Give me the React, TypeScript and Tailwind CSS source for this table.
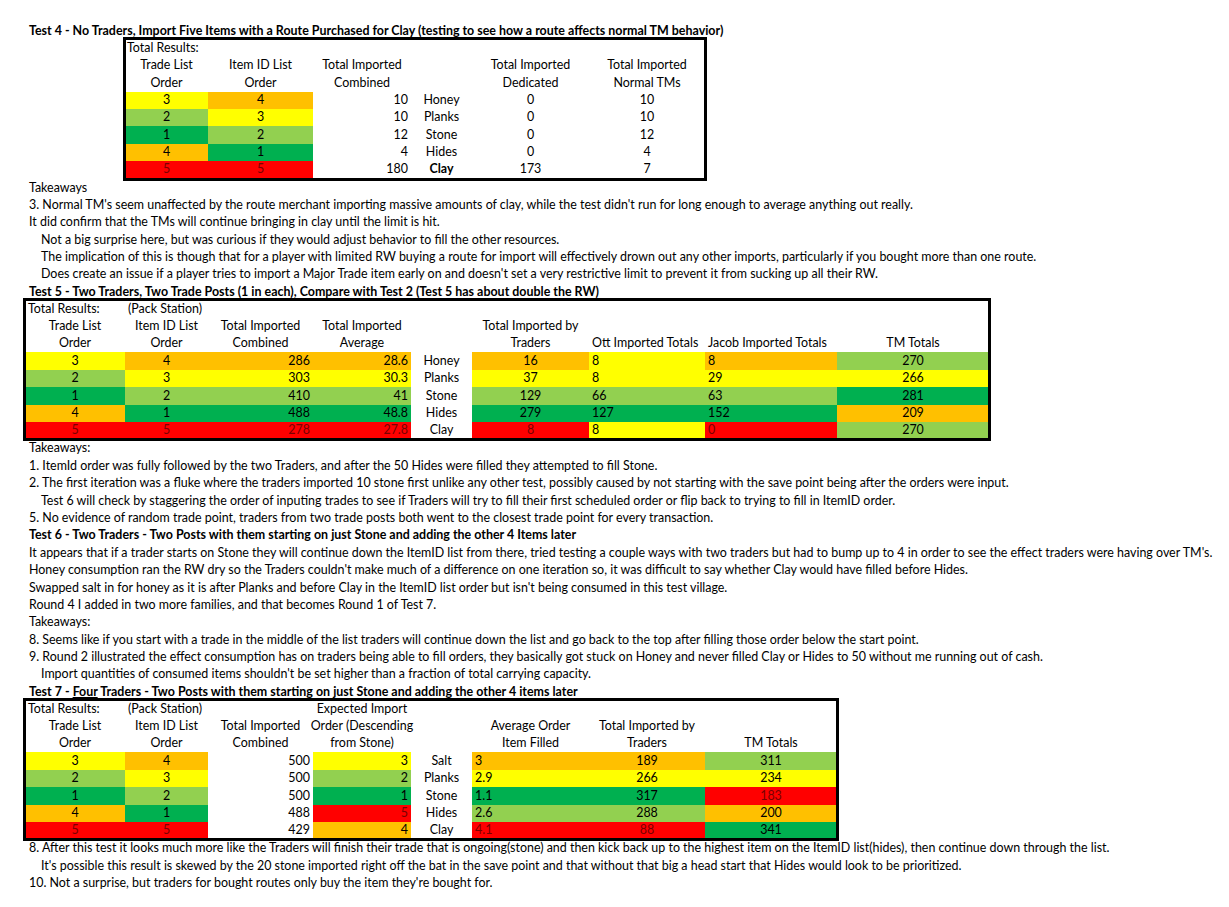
import React from "react";
import clsx from "clsx";

type Fill = "y" | "o" | "lg" | "g" | "r" | "";
type Align = "c" | "r" | "l";

const fillCls: Record<Fill, string> = {
  y: "bg-[#ffff00]",
  o: "bg-[#ffc000]",
  lg: "bg-[#92d050]",
  g: "bg-[#00b050]",
  r: "bg-[#ff0000] text-[#7a0000]",
  "": "",
};

const alignCls: Record<Align, string> = {
  c: "justify-center",
  r: "justify-end pr-[3px]",
  l: "justify-start pl-[3px]",
};

function Cell({ f = "", a = "c", b = false, children }: { f?: Fill; a?: Align; b?: boolean; children?: React.ReactNode }) {
  return (
    <div className={clsx("flex items-center h-[17.4px] whitespace-nowrap min-w-0", fillCls[f], alignCls[a], b && "font-bold")}>
      {children}
    </div>
  );
}

function Line({ children, indent = false, bold = false }: { children: React.ReactNode; indent?: boolean; bold?: boolean }) {
  return (
    <div className={clsx("h-[17.4px] leading-[17.4px] whitespace-nowrap", indent ? "pl-[41px]" : "pl-[29px]", bold && "font-bold")}>
      {children}
    </div>
  );
}

// columns B..G
function Test4() {
  const rows: [Fill, string, Fill, string, string, string, string, string][] = [
    ["y", "3", "o", "4", "10", "Honey", "0", "10"],
    ["lg", "2", "y", "3", "10", "Planks", "0", "10"],
    ["g", "1", "lg", "2", "12", "Stone", "0", "12"],
    ["o", "4", "g", "1", "4", "Hides", "0", "4"],
    ["r", "5", "r", "5", "180", "Clay", "173", "7"],
  ];
  return (
    <div className="ml-[125px] w-[580px] outline-[3px] outline-black -outline-offset-1">
      <div className="h-[17.4px] leading-[17.4px] pl-[2px]">Total Results:</div>
      <div className="grid grid-cols-[83px_105px_98px_61px_117px_116px]">
        <Cell>Trade List</Cell>
        <Cell>Item ID List</Cell>
        <Cell>Total Imported</Cell>
        <Cell />
        <Cell>Total Imported</Cell>
        <Cell>Total Imported</Cell>
        <Cell>Order</Cell>
        <Cell>Order</Cell>
        <Cell>Combined</Cell>
        <Cell />
        <Cell>Dedicated</Cell>
        <Cell>Normal TMs</Cell>
        {rows.map((r) => (
          <React.Fragment key={r[5]}>
            <Cell f={r[0]}>{r[1]}</Cell>
            <Cell f={r[2]}>{r[3]}</Cell>
            <Cell a="r">{r[4]}</Cell>
            <Cell b={r[5] === "Clay"}>{r[5]}</Cell>
            <Cell>{r[6]}</Cell>
            <Cell>{r[7]}</Cell>
          </React.Fragment>
        ))}
      </div>
    </div>
  );
}

// columns A..I
function Test5() {
  const rows: { t: [Fill, string]; i: [Fill, string]; c: [Fill, string]; av: [Fill, string]; name: string; tr: [Fill, string]; ott: [Fill, string]; jac: [Fill, string]; tm: [Fill, string] }[] = [
    { t: ["y", "3"], i: ["o", "4"], c: ["o", "286"], av: ["o", "28.6"], name: "Honey", tr: ["o", "16"], ott: ["y", "8"], jac: ["o", "8"], tm: ["lg", "270"] },
    { t: ["lg", "2"], i: ["y", "3"], c: ["y", "303"], av: ["y", "30.3"], name: "Planks", tr: ["y", "37"], ott: ["y", "8"], jac: ["y", "29"], tm: ["y", "266"] },
    { t: ["g", "1"], i: ["lg", "2"], c: ["lg", "410"], av: ["lg", "41"], name: "Stone", tr: ["lg", "129"], ott: ["lg", "66"], jac: ["lg", "63"], tm: ["g", "281"] },
    { t: ["o", "4"], i: ["g", "1"], c: ["g", "488"], av: ["g", "48.8"], name: "Hides", tr: ["g", "279"], ott: ["g", "127"], jac: ["g", "152"], tm: ["o", "209"] },
    { t: ["r", "5"], i: ["r", "5"], c: ["r", "278"], av: ["r", "27.8"], name: "Clay", tr: ["r", "8"], ott: ["y", "8"], jac: ["r", "0"], tm: ["lg", "270"] },
  ];
  return (
    <div className="ml-[25px] w-[964px] outline-[3px] outline-black -outline-offset-1">
      <div className="grid grid-cols-[100px_83px_105px_98px_61px_117px_116px_132px_152px]">
        <Cell a="l">Total Results:</Cell>
        <Cell a="l">(Pack Station)</Cell>
        <Cell />
        <Cell />
        <Cell />
        <Cell />
        <Cell />
        <Cell />
        <Cell />
        <Cell>Trade List</Cell>
        <Cell>Item ID List</Cell>
        <Cell>Total Imported</Cell>
        <Cell>Total Imported</Cell>
        <Cell />
        <Cell>Total Imported by</Cell>
        <Cell />
        <Cell />
        <Cell />
        <Cell>Order</Cell>
        <Cell>Order</Cell>
        <Cell>Combined</Cell>
        <Cell>Average</Cell>
        <Cell />
        <Cell>Traders</Cell>
        <Cell a="l">Ott Imported Totals</Cell>
        <Cell a="l">Jacob Imported Totals</Cell>
        <Cell>TM Totals</Cell>
        {rows.map((r) => (
          <React.Fragment key={r.name}>
            <Cell f={r.t[0]}>{r.t[1]}</Cell>
            <Cell f={r.i[0]}>{r.i[1]}</Cell>
            <Cell f={r.c[0]} a="r">{r.c[1]}</Cell>
            <Cell f={r.av[0]} a="r">{r.av[1]}</Cell>
            <Cell>{r.name}</Cell>
            <Cell f={r.tr[0]}>{r.tr[1]}</Cell>
            <Cell f={r.ott[0]} a="l">{r.ott[1]}</Cell>
            <Cell f={r.jac[0]} a="l">{r.jac[1]}</Cell>
            <Cell f={r.tm[0]}>{r.tm[1]}</Cell>
          </React.Fragment>
        ))}
      </div>
    </div>
  );
}

// columns A..H
function Test7() {
  const rows: { t: [Fill, string]; i: [Fill, string]; c: string; ex: [Fill, string]; name: string; av: [Fill, string]; tr: [Fill, string]; tm: [Fill, string] }[] = [
    { t: ["y", "3"], i: ["o", "4"], c: "500", ex: ["y", "3"], name: "Salt", av: ["o", "3"], tr: ["o", "189"], tm: ["lg", "311"] },
    { t: ["lg", "2"], i: ["y", "3"], c: "500", ex: ["lg", "2"], name: "Planks", av: ["y", "2.9"], tr: ["y", "266"], tm: ["y", "234"] },
    { t: ["g", "1"], i: ["lg", "2"], c: "500", ex: ["g", "1"], name: "Stone", av: ["g", "1.1"], tr: ["g", "317"], tm: ["r", "183"] },
    { t: ["o", "4"], i: ["g", "1"], c: "488", ex: ["r", "5"], name: "Hides", av: ["lg", "2.6"], tr: ["lg", "288"], tm: ["o", "200"] },
    { t: ["r", "5"], i: ["r", "5"], c: "429", ex: ["o", "4"], name: "Clay", av: ["r", "4.1"], tr: ["r", "88"], tm: ["g", "341"] },
  ];
  return (
    <div className="ml-[25px] w-[812px] outline-[3px] outline-black -outline-offset-1">
      <div className="grid grid-cols-[100px_83px_105px_98px_61px_117px_116px_132px]">
        <Cell a="l">Total Results:</Cell>
        <Cell a="l">(Pack Station)</Cell>
        <Cell />
        <Cell>Expected Import</Cell>
        <Cell />
        <Cell />
        <Cell />
        <Cell />
        <Cell>Trade List</Cell>
        <Cell>Item ID List</Cell>
        <Cell>Total Imported</Cell>
        <Cell>Order (Descending</Cell>
        <Cell />
        <Cell>Average Order</Cell>
        <Cell>Total Imported by</Cell>
        <Cell />
        <Cell>Order</Cell>
        <Cell>Order</Cell>
        <Cell>Combined</Cell>
        <Cell>from Stone)</Cell>
        <Cell />
        <Cell>Item Filled</Cell>
        <Cell>Traders</Cell>
        <Cell>TM Totals</Cell>
        {rows.map((r) => (
          <React.Fragment key={r.name}>
            <Cell f={r.t[0]}>{r.t[1]}</Cell>
            <Cell f={r.i[0]}>{r.i[1]}</Cell>
            <Cell a="r">{r.c}</Cell>
            <Cell f={r.ex[0]} a="r">{r.ex[1]}</Cell>
            <Cell>{r.name}</Cell>
            <Cell f={r.av[0]} a="l">{r.av[1]}</Cell>
            <Cell f={r.tr[0]}>{r.tr[1]}</Cell>
            <Cell f={r.tm[0]}>{r.tm[1]}</Cell>
          </React.Fragment>
        ))}
      </div>
    </div>
  );
}

export default function App() {
  return (
    <div className="min-h-screen bg-white text-black pt-[22px] text-[12.45px] font-['Lato',sans-serif]">
      <Line bold>Test 4 - No Traders, Import Five Items with a Route Purchased for Clay (testing to see how a route affects normal TM behavior)</Line>
      <Test4 />
      <Line>Takeaways</Line>
      <Line>3. Normal TM's seem unaffected by the route merchant importing massive amounts of clay, while the test didn't run for long enough to average anything out really.</Line>
      <Line>It did confirm that the TMs will continue bringing in clay until the limit is hit.</Line>
      <Line indent>Not a big surprise here, but was curious if they would adjust behavior to fill the other resources.</Line>
      <Line indent>The implication of this is though that for a player with limited RW buying a route for import will effectively drown out any other imports, particularly if you bought more than one route.</Line>
      <Line indent>Does create an issue if a player tries to import a Major Trade item early on and doesn't set a very restrictive limit to prevent it from sucking up all their RW.</Line>
      <Line bold>Test 5 - Two Traders, Two Trade Posts (1 in each), Compare with Test 2 (Test 5 has about double the RW)</Line>
      <Test5 />
      <Line>Takeaways:</Line>
      <Line>1. ItemId order was fully followed by the two Traders, and after the 50 Hides were filled they attempted to fill Stone.</Line>
      <Line>2. The first iteration was a fluke where the traders imported 10 stone first unlike any other test, possibly caused by not starting with the save point being after the orders were input.</Line>
      <Line indent>Test 6 will check by staggering the order of inputing trades to see if Traders will try to fill their first scheduled order or flip back to trying to fill in ItemID order.</Line>
      <Line>5. No evidence of random trade point, traders from two trade posts both went to the closest trade point for every transaction.</Line>
      <Line bold>Test 6 - Two Traders - Two Posts with them starting on just Stone and adding the other 4 Items later</Line>
      <Line>It appears that if a trader starts on Stone they will continue down the ItemID list from there, tried testing a couple ways with two traders but had to bump up to 4 in order to see the effect traders were having over TM's.</Line>
      <Line>Honey consumption ran the RW dry so the Traders couldn't make much of a difference on one iteration so, it was difficult to say whether Clay would have filled before Hides.</Line>
      <Line>Swapped salt in for honey as it is after Planks and before Clay in the ItemID list order but isn't being consumed in this test village.</Line>
      <Line>Round 4 I added in two more families, and that becomes Round 1 of Test 7.</Line>
      <Line>Takeaways:</Line>
      <Line>8. Seems like if you start with a trade in the middle of the list traders will continue down the list and go back to the top after filling those order below the start point.</Line>
      <Line>9. Round 2 illustrated the effect consumption has on traders being able to fill orders, they basically got stuck on Honey and never filled Clay or Hides to 50 without me running out of cash.</Line>
      <Line indent>Import quantities of consumed items shouldn't be set higher than a fraction of total carrying capacity.</Line>
      <Line bold>
        Test 7 - <span className="underline">Four</span> Traders - Two Posts with them starting on just Stone and adding the other 4 items later
      </Line>
      <Test7 />
      <Line>8. After this test it looks much more like the Traders will finish their trade that is ongoing(stone) and then kick back up to the highest item on the ItemID list(hides), then continue down through the list.</Line>
      <Line indent>It's possible this result is skewed by the 20 stone imported right off the bat in the save point and that without that big a head start that Hides would look to be prioritized.</Line>
      <Line>10. Not a surprise, but traders for bought routes only buy the item they're bought for.</Line>
    </div>
  );
}
